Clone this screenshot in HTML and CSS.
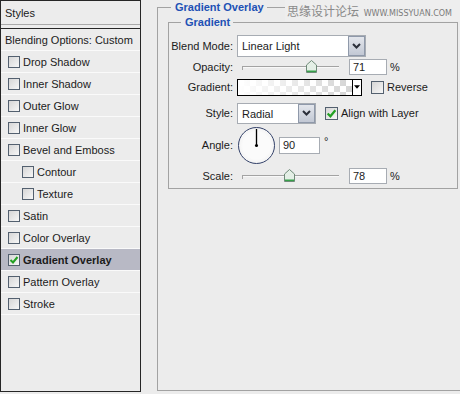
FILE: index.html
```html
<!DOCTYPE html>
<html lang="en">
<head>
    <meta charset="UTF-8">
    <title>Layer Style</title>
    <link rel="stylesheet" href="styles.css">
</head>
<body>
    <div class="dialog">
        <aside class="styles-panel">
            <div class="panel-head">Styles</div>
            <ul class="effect-list">
                <li class="effect plain">Blending Options: Custom</li>
                <li class="effect"><span class="check"></span>Drop Shadow</li>
                <li class="effect"><span class="check"></span>Inner Shadow</li>
                <li class="effect"><span class="check"></span>Outer Glow</li>
                <li class="effect"><span class="check"></span>Inner Glow</li>
                <li class="effect"><span class="check"></span>Bevel and Emboss</li>
                <li class="effect sub"><span class="check"></span>Contour</li>
                <li class="effect sub"><span class="check"></span>Texture</li>
                <li class="effect"><span class="check"></span>Satin</li>
                <li class="effect"><span class="check"></span>Color Overlay</li>
                <li class="effect active">
                    <span class="check"><svg viewBox="0 0 10 10"><path d="M1.5 5 L4 7.5 L8.5 2" /></svg></span>Gradient Overlay
                </li>
                <li class="effect"><span class="check"></span>Pattern Overlay</li>
                <li class="effect"><span class="check"></span>Stroke</li>
            </ul>
        </aside>

        <main class="settings">
            <fieldset class="group outer">
                <legend>Gradient Overlay</legend>
                <fieldset class="group inner">
                    <legend>Gradient</legend>

                    <div class="row row-blend">
                        <label>Blend Mode:</label>
                        <div class="select blend-select">
                            <span class="value">Linear Light</span>
                            <span class="arrow"><svg viewBox="0 0 9 6"><path d="M1 1 L4.5 4.5 L8 1" /></svg></span>
                        </div>
                    </div>

                    <div class="row row-slider">
                        <label>Opacity:</label>
                        <div class="slider">
                            <span class="thumb" style="left: 71%"><svg viewBox="0 0 11 13"><path class="thumb-body" d="M0.5 5 L5.5 0.5 L10.5 5 L10.5 12.5 L0.5 12.5 Z" /><path class="thumb-base" d="M1 10.5 H10 V12 H1 Z" /></svg></span>
                        </div>
                        <div class="num">71</div>
                        <span class="unit">%</span>
                    </div>

                    <div class="row row-gradient">
                        <label>Gradient:</label>
                        <div class="gradient-box">
                            <span class="swatch"></span>
                            <span class="mini-arrow"><svg viewBox="0 0 7 4"><path d="M0 0 H7 L3.5 4 Z" /></svg></span>
                        </div>
                        <span class="check box"></span>
                        <span class="option">Reverse</span>
                    </div>

                    <div class="row row-style">
                        <label>Style:</label>
                        <div class="select style-select">
                            <span class="value">Radial</span>
                            <span class="arrow"><svg viewBox="0 0 9 6"><path d="M1 1 L4.5 4.5 L8 1" /></svg></span>
                        </div>
                        <span class="check box"><svg viewBox="0 0 10 10"><path d="M1.5 5 L4 7.5 L8.5 2" /></svg></span>
                        <span class="option">Align with Layer</span>
                    </div>

                    <div class="row row-angle">
                        <label>Angle:</label>
                        <div class="dial">
                            <svg viewBox="0 0 37 37"><line x1="18.5" y1="18.5" x2="18.5" y2="1" /><circle cx="18.5" cy="18.5" r="1.6" /></svg>
                        </div>
                        <div class="num angle-num">90</div>
                        <span class="unit degree">°</span>
                    </div>

                    <div class="row row-slider row-scale">
                        <label>Scale:</label>
                        <div class="slider">
                            <span class="thumb" style="left: 48.6%"><svg viewBox="0 0 11 13"><path class="thumb-body" d="M0.5 5 L5.5 0.5 L10.5 5 L10.5 12.5 L0.5 12.5 Z" /><path class="thumb-base" d="M1 10.5 H10 V12 H1 Z" /></svg></span>
                        </div>
                        <div class="num">78</div>
                        <span class="unit">%</span>
                    </div>
                </fieldset>
            </fieldset>

            <div class="watermark">思缘设计论坛 <span class="site">www.MISSYUAN.COM</span></div>
        </main>
    </div>
</body>
</html>
```

FILE: styles.css
```css
html, body {
    margin: 0;
    padding: 0;
    height: 100%;
}
body {
    background-color: #ececec;
    font-family: "Liberation Sans", Arial, sans-serif;
    font-size: 11px;
    color: #1b1b1b;
    overflow: hidden;
}
.dialog {
    display: flex;
    width: 460px;
    height: 394px;
    position: relative;
}

/* left list of effects */
.styles-panel {
    width: 139px;
    height: 390px;
    border: 1px solid #262626;
    display: flex;
    flex-direction: column;
    flex-shrink: 0;
}
.panel-head {
    height: 23px;
    line-height: 24px;
    padding-left: 4px;
    border-bottom: 1px solid #a9a9a9;
    margin-bottom: 3px;
}
.effect-list {
    list-style: none;
    margin: 0;
    padding: 0;
    border-top: 1px solid #262626;
}
.effect {
    height: 21px;
    border-bottom: 1px solid #fafafa;
    display: flex;
    align-items: center;
    padding-left: 7px;
    white-space: nowrap;
}
.effect.plain {
    padding-left: 4px;
}
.effect.sub {
    padding-left: 21px;
}
.effect.active {
    background-color: #b8b9c5;
    font-weight: bold;
}
.check {
    width: 10px;
    height: 10px;
    border: 1px solid #53606f;
    background: linear-gradient(135deg, #d6d6d6, #f7f7f7);
    margin-right: 3px;
    display: flex;
    flex-shrink: 0;
}
.check svg {
    width: 10px;
    height: 10px;
}
.check path {
    fill: none;
    stroke: #22a022;
    stroke-width: 2;
}

/* right side settings */
.settings {
    flex: 1;
    padding: 0 0 0 16px;
    min-width: 0;
}
.group {
    margin: 0;
    padding: 0;
    border: 1px solid #a2a2a2;
    min-width: 0;
    box-sizing: border-box;
}
.group legend {
    font-weight: bold;
    color: #2151b5;
    font-size: 11px;
    line-height: 13px;
    padding: 0 3px 0 4px;
}
.outer {
    margin-top: 1px;
    height: 390px;
    width: 320px;
    padding-left: 10px;
}
.outer > legend {
    margin-left: 3px;
}
.inner {
    margin-top: 2px;
    width: 290px;
    padding-bottom: 4px;
}
.inner > legend {
    margin-left: 12px;
}

.row {
    display: flex;
    align-items: center;
}
.row label {
    width: 64px;
    text-align: right;
    margin-right: 4px;
    flex-shrink: 0;
}
.row-blend {
    margin-top: 5px;
    height: 24px;
}
.row-slider {
    margin-top: 0;
    height: 17px;
}
.row-gradient {
    margin-top: 3px;
    height: 18px;
}
.row-style {
    margin-top: 5px;
    height: 24px;
}
.row-angle {
    margin-top: 1px;
    height: 38px;
}
.row-scale {
    margin-top: 3px;
}

.select {
    display: flex;
    height: 22px;
    box-sizing: border-box;
    background-color: #fff;
    border: 1px solid #a7acb3;
}
.blend-select {
    width: 129px;
}
.style-select {
    width: 79px;
    height: 21px;
}
.select .value {
    flex: 1;
    padding-left: 4px;
    line-height: 20px;
}
.select .arrow {
    width: 15px;
    background: linear-gradient(#e3e6ec, #c2c8d4);
    border: 1px solid #8f99aa;
    display: flex;
    align-items: center;
    justify-content: center;
}
.select .arrow svg {
    width: 9px;
    height: 6px;
}
.select .arrow path {
    fill: none;
    stroke: #2b2f3a;
    stroke-width: 2;
}

.slider {
    position: relative;
    width: 97px;
    height: 13px;
    margin: 0 10px 0 5px;
}
.slider::before {
    content: "";
    position: absolute;
    left: 0;
    right: 0;
    top: 6px;
    border-top: 1px solid #a3a3a3;
    border-bottom: 1px solid #f8f8f8;
}
.slider::after {
    content: "";
    position: absolute;
    left: 0;
    top: 6px;
    height: 4px;
    border-left: 1px solid #a3a3a3;
}
.thumb {
    position: absolute;
    top: 0;
    width: 11px;
    height: 13px;
    margin-left: -5px;
}
.thumb svg {
    width: 11px;
    height: 13px;
    display: block;
}
.thumb-body {
    fill: #e4efe6;
    stroke: #6f8a78;
    stroke-width: 1;
}
.thumb-base {
    fill: #37a04a;
}

.num {
    width: 38px;
    height: 16px;
    box-sizing: border-box;
    border: 1px solid #a7acb3;
    background-color: #fff;
    padding-left: 3px;
    line-height: 15px;
}
.unit {
    margin-left: 3px;
}
.degree {
    margin-left: 4px;
    margin-bottom: 8px;
}

.gradient-box {
    display: flex;
    width: 125px;
    height: 17px;
    box-sizing: border-box;
    border: 1px solid #000;
}
.swatch {
    flex: 1;
    background:
        linear-gradient(to right, #fff 0%, rgba(255, 255, 255, 0) 100%),
        conic-gradient(#d4d4d4 25%, #fff 0 50%, #d4d4d4 0 75%, #fff 0) 0 0 / 12px 12px;
}
.mini-arrow {
    width: 8px;
    border-left: 1px solid #000;
    background-color: #fff;
    display: flex;
    align-items: center;
    justify-content: center;
}
.mini-arrow svg {
    width: 6px;
    height: 4px;
}
.mini-arrow path {
    fill: #000;
}
.check.box {
    width: 11px;
    height: 11px;
    margin-left: 9px;
    margin-right: 3px;
}
.check.box svg {
    width: 11px;
    height: 11px;
}
.row-style .check.box {
    margin-left: 9px;
}

.dial {
    width: 35px;
    height: 35px;
    border: 1px solid #34426a;
    border-radius: 50%;
    background: radial-gradient(circle, #fbfbfb 55%, #e6e6e6 100%);
    margin-left: 1px;
}
.dial svg {
    width: 35px;
    height: 35px;
    display: block;
}
.dial line {
    stroke: #000;
    stroke-width: 1.4;
}
.dial circle {
    fill: #000;
}
.angle-num {
    width: 41px;
    height: 17px;
    margin-left: 4px;
}

.watermark {
    position: absolute;
    top: 0;
    left: 285px;
    right: 0;
    height: 21px;
    background-color: #eeeeee;
    color: #8a8a8a;
    font-family: "Noto Sans CJK SC", sans-serif;
    font-size: 12px;
    line-height: 21px;
    padding-left: 2px;
    white-space: nowrap;
}
.watermark .site {
    font-family: "DejaVu Sans", sans-serif;
    font-size: 8px;
    text-transform: uppercase;
    color: #7a7a7a;
    margin-left: 2px;
}
```
